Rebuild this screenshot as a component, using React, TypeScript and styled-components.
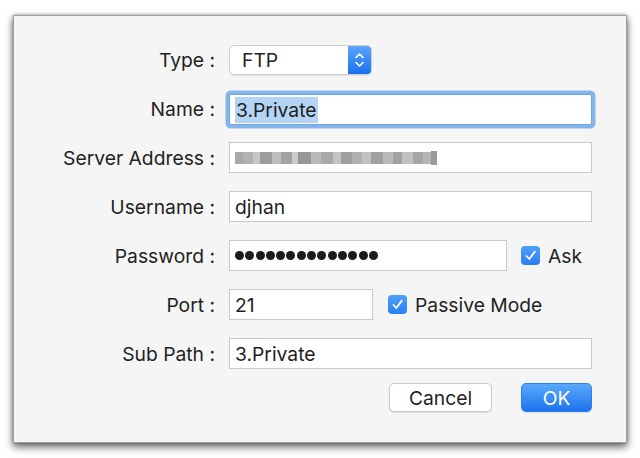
import React from "react";
import styled, { createGlobalStyle } from "styled-components";

const Global = createGlobalStyle`
  html, body { margin: 0; padding: 0; background: #ffffff; }
  body { font-family: Inter, "Liberation Sans", sans-serif; color: #222; }
`;

const Page = styled.div`
  width: 640px;
  height: 458px;
  padding: 15px 13px 15px 13px;
  box-sizing: border-box;
`;

const Dialog = styled.div`
  width: 614px;
  height: 428px;
  box-sizing: border-box;
  background: #f5f5f5;
  border: 1px solid #a0a0a0;
  box-shadow: 0 4px 8px rgba(0, 0, 0, 0.6), 0 0 3px rgba(0, 0, 0, 0.35);
  padding: 28px 34px 0 0;
  display: flex;
  flex-direction: column;
`;

const Form = styled.div`
  display: grid;
  grid-template-columns: 201px 1fr;
  grid-auto-rows: 31px;
  column-gap: 14px;
  row-gap: 18px;
  align-items: center;
`;

const Label = styled.div`
  text-align: right;
  font-size: 19.3px;
  white-space: nowrap;
`;

const FieldRow = styled.div<{ $shift?: number }>`
  display: flex;
  align-items: center;
  height: 31px;
  margin-top: ${(p) => p.$shift ?? 0}px;
`;

const Input = styled.div<{ $w?: number; $focus?: boolean }>`
  width: ${(p) => (p.$w ? `${p.$w}px` : "100%")};
  height: 31px;
  box-sizing: border-box;
  background: #fff;
  border: 1px solid #c9c9c9;
  display: flex;
  align-items: center;
  padding-left: 5px;
  font-size: 19.3px;
  color: #1e1e1e;
  box-shadow: ${(p) => (p.$focus ? "0 0 0 3.5px #86b5ea" : "none")};
  border-radius: ${(p) => (p.$focus ? "2px" : "0")};
  border-color: ${(p) => (p.$focus ? "#6ea5e4" : "#c9c9c9")};
`;

const Selected = styled.span`
  background: #b4d4f6;
  padding: 1px 1px;
`;

const Select = styled.div`
  width: 143px;
  height: 30px;
  box-sizing: border-box;
  border: 1px solid #cfcfcf;
  border-radius: 5px;
  background: #fff;
  display: flex;
  align-items: stretch;
  overflow: hidden;
  box-shadow: 0 1px 1px rgba(0, 0, 0, 0.08);
`;

const SelectText = styled.div`
  flex: 1;
  display: flex;
  align-items: center;
  padding-left: 12px;
  font-size: 19.3px;
`;

const Stepper = styled.div`
  width: 23px;
  background: linear-gradient(#5aa6fb, #1c70ee);
  display: flex;
  align-items: center;
  justify-content: center;
`;

const Tiles = styled.div`
  display: flex;
  align-items: center;
  height: 16px;
  filter: blur(0.4px);
`;

const Tile = styled.span<{ $c: string; $w: number; $h: number }>`
  display: inline-block;
  width: ${(p) => p.$w}px;
  height: ${(p) => p.$h}px;
  background: ${(p) => p.$c};
`;

const Dots = styled.div`
  display: flex;
  gap: 1.3px;
`;

const Dot = styled.span`
  width: 9px;
  height: 9px;
  border-radius: 50%;
  background: #1b1b1b;
`;

const Check = styled.label<{ $ml: number }>`
  display: flex;
  align-items: center;
  gap: 8px;
  margin-left: ${(p) => p.$ml}px;
  font-size: 19.3px;
`;

const Box = styled.span`
  width: 19px;
  height: 19px;
  border-radius: 4px;
  background: linear-gradient(#4f9ffa, #2a7ff2);
  display: flex;
  align-items: center;
  justify-content: center;
`;

const Buttons = styled.div`
  display: flex;
  justify-content: flex-end;
  gap: 29px;
  margin-top: 14px;
`;

const Button = styled.button<{ $primary?: boolean }>`
  height: 29px;
  width: ${(p) => (p.$primary ? 71 : 103)}px;
  box-sizing: border-box;
  border-radius: 5px;
  font-family: inherit;
  font-size: 19.3px;
  border: 1px solid ${(p) => (p.$primary ? "#2a80ef" : "#cacaca")};
  background: ${(p) => (p.$primary ? "linear-gradient(#5aa8fb, #1d74ef)" : "#fff")};
  color: ${(p) => (p.$primary ? "#fff" : "#222")};
  box-shadow: 0 1px 1px rgba(0, 0, 0, 0.1);
  padding: 0;
`;

const CheckIcon = () => (
  <svg width="13" height="13" viewBox="0 0 13 13">
    <path d="M2.5 7 L5.3 10 L10.8 2.6" fill="none" stroke="#fff" strokeWidth="1.8" strokeLinecap="round" strokeLinejoin="round" />
  </svg>
);

const tiles: [string, number, number][] = [
  ["#a8a8a8", 8, 12], ["#b2b2b2", 10, 12], ["#c6c6c6", 7, 12], ["#9c9c9c", 12, 12], ["#bdbdbd", 9, 12],
  ["#a3a3a3", 11, 12], ["#cccccc", 6, 12], ["#979797", 13, 12], ["#b9b9b9", 10, 12], ["#a9a9a9", 12, 12],
  ["#c4c4c4", 8, 12], ["#9e9e9e", 11, 12], ["#b0b0b0", 10, 12], ["#c2c2c2", 9, 12], ["#a0a0a0", 12, 12],
  ["#bababa", 10, 12], ["#a2a2a2", 9, 12], ["#c1c1c1", 11, 12], ["#a6a6a6", 10, 12], ["#b5b5b5", 8, 12],
  ["#9a9a9a", 6, 14],
];

export default function App() {
  return (
    <Page>
      <Global />
      <Dialog>
        <Form>
          <Label>Type :</Label>
          <FieldRow>
            <Select>
              <SelectText>FTP</SelectText>
              <Stepper>
                <svg width="11" height="18" viewBox="0 0 11 18">
                  <path d="M2 6.5 L5.5 3 L9 6.5 M2 11.5 L5.5 15 L9 11.5" fill="none" stroke="#fff" strokeWidth="1.6" strokeLinecap="round" strokeLinejoin="round" />
                </svg>
              </Stepper>
            </Select>
          </FieldRow>

          <Label>Name :</Label>
          <FieldRow $shift={2}>
            <Input $focus>
              <Selected>3.Private</Selected>
            </Input>
          </FieldRow>

          <Label>Server Address :</Label>
          <FieldRow>
            <Input>
              <Tiles>
                {tiles.map(([c, w, h], i) => (
                  <Tile key={i} $c={c} $w={w} $h={h} />
                ))}
              </Tiles>
            </Input>
          </FieldRow>

          <Label>Username :</Label>
          <FieldRow>
            <Input>djhan</Input>
          </FieldRow>

          <Label>Password :</Label>
          <FieldRow>
            <Input $w={278}>
              <Dots>
                {Array.from({ length: 14 }).map((_, i) => (
                  <Dot key={i} />
                ))}
              </Dots>
            </Input>
            <Check $ml={14}>
              <Box>
                <CheckIcon />
              </Box>
              Ask
            </Check>
          </FieldRow>

          <Label>Port :</Label>
          <FieldRow>
            <Input $w={144}>21</Input>
            <Check $ml={15}>
              <Box>
                <CheckIcon />
              </Box>
              Passive Mode
            </Check>
          </FieldRow>

          <Label>Sub Path :</Label>
          <FieldRow>
            <Input>3.Private</Input>
          </FieldRow>
        </Form>
        <Buttons>
          <Button>Cancel</Button>
          <Button $primary>OK</Button>
        </Buttons>
      </Dialog>
    </Page>
  );
}
